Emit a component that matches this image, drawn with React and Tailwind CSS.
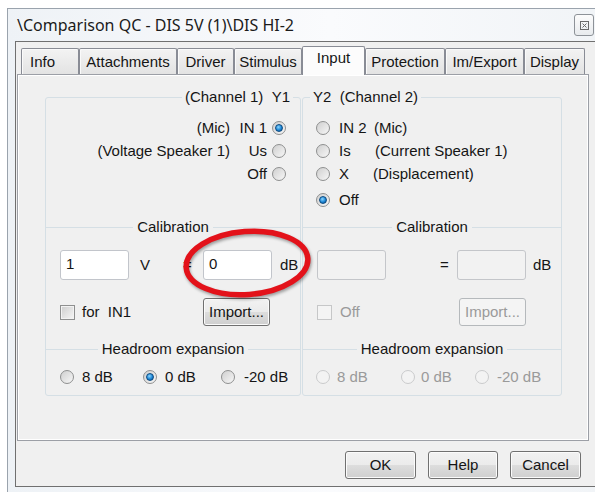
import React from "react";

const tabs = [
  { label: "Info", w: "w-[58px] justify-start pl-[8px]" },
  { label: "Attachments", w: "w-[98px] justify-center" },
  { label: "Driver", w: "w-[57px] justify-center" },
  { label: "Stimulus", w: "w-[68px] justify-center" },
  { label: "Input", w: "w-[63px] justify-center", active: true },
  { label: "Protection", w: "w-[80px] justify-center" },
  { label: "Im/Export", w: "w-[79px] justify-center" },
  { label: "Display", w: "w-[61px] justify-center" },
];

function Radio({ checked, disabled }) {
  return (
    <span
      className={`flex h-[14px] w-[14px] shrink-0 items-center justify-center rounded-full border ${
        disabled
          ? "border-[#cacbcc] bg-[#f3f3f3]"
          : "border-[#8e8f8f] bg-[linear-gradient(135deg,#cfcfcf,#f7f7f7)]"
      }`}
    >
      {checked && (
        <span className="h-[8px] w-[8px] rounded-full border border-[#0d4a80] bg-[radial-gradient(circle_at_40%_35%,#8ad6ff,#1c86d6_55%,#0b4c88)]" />
      )}
    </span>
  );
}

function Checkbox({ disabled }) {
  return (
    <span
      className={`h-[15px] w-[15px] shrink-0 border ${
        disabled
          ? "border-[#c6c7c8] bg-[#f4f4f4]"
          : "border-[#8e8f8f] bg-[linear-gradient(135deg,#cdcdcd,#f6f6f6)] shadow-[inset_0_0_0_1px_#f2f2f2]"
      }`}
    />
  );
}

function TextBox({ value, disabled }) {
  return (
    <div
      className={`h-[30px] w-[69px] shrink-0 rounded-[3px] border px-[5px] pt-[4px] ${
        disabled ? "border-[#c4c6ca] bg-[#f2f2f2]" : "border-[#c2c5cb] bg-white"
      }`}
    >
      {value}
    </div>
  );
}

function Button({ children, disabled, className = "" }) {
  return (
    <button
      className={`flex h-[28px] shrink-0 items-center justify-center rounded-[3px] border ${
        disabled
          ? "border-[#b5b9bc] bg-[#f4f4f4] text-[#9a9a9a]"
          : "border-[#707070] bg-[linear-gradient(#f2f2f2_0%,#ebebeb_50%,#dddddd_51%,#cfcfcf_100%)] shadow-[inset_0_0_0_1px_#fbfbfb]"
      } ${className}`}
    >
      {children}
    </button>
  );
}

function Divider({ label }) {
  return (
    <div className="flex h-[18px] items-center">
      <div className="h-px flex-1 bg-[#d5dfe5]" />
      <span className="px-[4px]">{label}</span>
      <div className="h-px flex-1 bg-[#d5dfe5]" />
    </div>
  );
}

function Tab({ label, w, active }) {
  if (active) {
    return (
      <div
        className={`relative z-10 -mb-px flex h-[29px] rounded-t-[2px] border border-b-0 border-[#898c95] bg-[#fcfcfc] pt-[2px] ${w}`}
      >
        {label}
      </div>
    );
  }
  return (
    <div
      className={`flex h-[26px] items-center rounded-t-[2px] border border-b-0 border-[#898c95] bg-[linear-gradient(#f3f3f3,#e3e3e3)] shadow-[inset_1px_1px_0_#fafafa] ${w}`}
    >
      {label}
    </div>
  );
}

function Channel1() {
  return (
    <fieldset className="w-[256px] shrink-0 rounded-[3px] border border-[#d5dfe5]">
      <legend className="ml-auto mr-[7px] px-[3px]">(Channel 1)&nbsp;&nbsp;Y1</legend>

      <div className="h-[112px] pt-[11px]">
        <div className="flex h-[22px] items-center justify-end pr-[14px]">
          <span>(Mic)</span>
          <span className="ml-[9px] w-[28px] text-right">IN 1</span>
          <span className="ml-[5px]">
            <Radio checked />
          </span>
        </div>
        <div className="mt-px flex h-[22px] items-center justify-end pr-[14px]">
          <span>(Voltage Speaker 1)</span>
          <span className="ml-[9px] w-[28px] text-right">Us</span>
          <span className="ml-[5px]">
            <Radio />
          </span>
        </div>
        <div className="mt-px flex h-[22px] items-center justify-end pr-[14px]">
          <span className="w-[28px] text-right">Off</span>
          <span className="ml-[5px]">
            <Radio />
          </span>
        </div>
      </div>

      <Divider label="Calibration" />
      <div className="mt-[14px] flex h-[30px] items-start pl-[14px]">
        <TextBox value="1" />
        <span className="ml-[11px] w-[43px] pt-[6px]">V</span>
        <span className="w-[20px] pt-[6px]">=</span>
        <TextBox value="0" />
        <span className="ml-[8px] pt-[6px]">dB</span>
      </div>
      <div className="mt-[18px] flex h-[28px] items-center pl-[14px]">
        <div className="flex w-[143px] items-center">
          <Checkbox />
          <span className="ml-[7px]">for&nbsp;&nbsp;IN1</span>
        </div>
        <Button className="w-[67px]">Import...</Button>
      </div>

      <div className="mt-[14px]">
        <Divider label="Headroom expansion" />
      </div>
      <div className="mt-[11px] flex h-[16px] items-center pl-[14px]">
        <div className="flex w-[83px] items-center">
          <Radio />
          <span className="ml-[8px]">8 dB</span>
        </div>
        <div className="flex w-[78px] items-center">
          <Radio checked />
          <span className="ml-[8px]">0 dB</span>
        </div>
        <div className="flex items-center">
          <Radio />
          <span className="ml-[9px]">-20 dB</span>
        </div>
      </div>
      <div className="h-[10px]" />
    </fieldset>
  );
}

function Channel2() {
  return (
    <fieldset className="w-[260px] shrink-0 rounded-[3px] border border-[#d5dfe5]">
      <legend className="ml-[7px] px-[3px]">Y2&nbsp;&nbsp;(Channel 2)</legend>

      <div className="h-[112px] pt-[11px] pl-[13px]">
        <div className="flex h-[22px] items-center">
          <Radio />
          <span className="ml-[9px] w-[35px]">IN 2</span>
          <span>(Mic)</span>
        </div>
        <div className="mt-px flex h-[22px] items-center">
          <Radio />
          <span className="ml-[9px] w-[36px]">Is</span>
          <span>(Current Speaker 1)</span>
        </div>
        <div className="mt-px flex h-[22px] items-center">
          <Radio />
          <span className="ml-[9px] w-[34px]">X</span>
          <span>(Displacement)</span>
        </div>
        <div className="mt-[4px] flex h-[22px] items-center">
          <Radio checked />
          <span className="ml-[9px]">Off</span>
        </div>
      </div>

      <Divider label="Calibration" />
      <div className="mt-[14px] flex h-[30px] items-start pl-[14px]">
        <TextBox disabled />
        <span className="w-[71px] pl-[54px] pt-[6px]">=</span>
        <TextBox disabled />
        <span className="ml-[7px] pt-[6px]">dB</span>
      </div>
      <div className="mt-[18px] flex h-[28px] items-center pl-[14px]">
        <div className="flex w-[142px] items-center">
          <Checkbox disabled />
          <span className="ml-[8px] text-[#9a9a9a]">Off</span>
        </div>
        <Button disabled className="w-[67px]">
          Import...
        </Button>
      </div>

      <div className="mt-[14px]">
        <Divider label="Headroom expansion" />
      </div>
      <div className="mt-[11px] flex h-[16px] items-center pl-[13px] text-[#9a9a9a]">
        <div className="flex w-[85px] items-center">
          <Radio disabled />
          <span className="ml-[7px]">8 dB</span>
        </div>
        <div className="flex w-[74px] items-center">
          <Radio disabled />
          <span className="ml-[6px]">0 dB</span>
        </div>
        <div className="flex items-center">
          <Radio disabled />
          <span className="ml-[8px]">-20 dB</span>
        </div>
      </div>
      <div className="h-[10px]" />
    </fieldset>
  );
}

export default function App() {
  return (
    <div className="relative h-[492px] w-[595px] overflow-hidden whitespace-nowrap bg-white font-['Liberation_Sans',Arial,sans-serif] text-[15px] leading-[18px] text-[#151515]">
      {/* window frame */}
      <div className="ml-[7px] mt-[8px] h-[484px] border-l border-t border-[#9aa3ad] bg-[linear-gradient(90deg,#eef2f6,#fafbfd_55%,#f1f4f7)] pl-[7px]">
        <div className="flex h-[32px] items-center justify-between pl-[2px]">
          <span className="font-['Noto_Sans',sans-serif] text-[16px] text-[#1b1b1b] [text-shadow:0_0_6px_#fff]">
            {"\\Comparison QC - DIS 5V (1)\\DIS HI-2"}
          </span>
          <div className="mr-[1px] flex h-[22px] w-[20px] items-center justify-center rounded-[3px] border border-[#8d9298] bg-[linear-gradient(#fcfcfc,#e8ebee)]">
            <svg width="9" height="9" viewBox="0 0 9 9">
              <rect x="0.5" y="0.5" width="8" height="8" fill="none" stroke="#6b6b6b" />
              <path d="M2.5 2.5l4 4M6.5 2.5l-4 4" stroke="#6b6b6b" />
            </svg>
          </div>
        </div>

        {/* client area */}
        <div className="h-[446px] border-b border-l border-t border-[#707070] bg-[#f0f0f0]">
          <div className="ml-[5px] mt-[4px] flex h-[28px] items-end">
            {tabs.map((t) => (
              <Tab key={t.label} {...t} />
            ))}
          </div>

          <div className="ml-px h-[367px] w-[572px] border border-[#9c9fa6] bg-[#f0f0f0] shadow-[inset_1px_1px_0_#fff,inset_-1px_-1px_0_#fff]">
            <div className="ml-[27px] mt-[13px] flex gap-px">
              <Channel1 />
              <Channel2 />
            </div>
          </div>

          <div className="mt-[10px] flex justify-end gap-[12px] pr-[14px]">
            <Button className="w-[71px]">OK</Button>
            <Button className="w-[70px]">Help</Button>
            <Button className="w-[71px]">Cancel</Button>
          </div>
        </div>
      </div>

      {/* red annotation ring */}
      <svg
        className="pointer-events-none absolute left-0 top-0 drop-shadow-[1px_2px_1.5px_rgba(0,0,0,0.35)]"
        width="595"
        height="492"
        viewBox="0 0 595 492"
      >
        <ellipse
          cx="247"
          cy="263"
          rx="61"
          ry="31.5"
          transform="rotate(-4.5 247 263)"
          fill="none"
          stroke="#e3121a"
          strokeWidth="5.5"
        />
      </svg>
    </div>
  );
}
